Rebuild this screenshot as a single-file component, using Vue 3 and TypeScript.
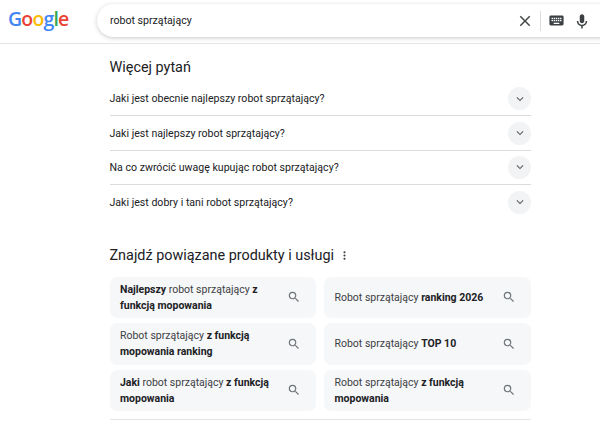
<script setup lang="ts">
interface Part {
  text: string;
  bold?: boolean;
}

const questions: string[] = [
  'Jaki jest obecnie najlepszy robot sprzątający?',
  'Jaki jest najlepszy robot sprzątający?',
  'Na co zwrócić uwagę kupując robot sprzątający?',
  'Jaki jest dobry i tani robot sprzątający?',
];

const chips: Part[][] = [
  [{ text: 'Najlepszy', bold: true }, { text: ' robot sprzątający ' }, { text: 'z funkcją mopowania', bold: true }],
  [{ text: 'Robot sprzątający ' }, { text: 'ranking 2026', bold: true }],
  [{ text: 'Robot sprzątający ' }, { text: 'z funkcją mopowania ranking', bold: true }],
  [{ text: 'Robot sprzątający ' }, { text: 'TOP 10', bold: true }],
  [{ text: 'Jaki', bold: true }, { text: ' robot sprzątający ' }, { text: 'z funkcją mopowania', bold: true }],
  [{ text: 'Robot sprzątający ' }, { text: 'z funkcją mopowania', bold: true }],
];
</script>

<template>
  <div class="page">
    <header class="topbar">
      <div class="logo" aria-label="Google">
        <span class="blue">G</span><span class="red">o</span><span class="yellow">o</span><span class="blue">g</span><span class="green">l</span><span class="red">e</span>
      </div>
      <div class="searchbox">
        <span class="query">robot sprzątający</span>
        <svg class="clear" viewBox="0 0 24 24" width="18" height="18">
          <path d="M19 6.41 17.59 5 12 10.59 6.41 5 5 6.41 10.59 12 5 17.59 6.41 19 12 13.41 17.59 19 19 17.59 13.41 12z" fill="#444746" />
        </svg>
        <span class="divider"></span>
        <svg class="kbd" viewBox="0 0 24 24" width="17" height="17">
          <path d="M20 5H4c-1.1 0-2 .9-2 2v10c0 1.1.9 2 2 2h16c1.1 0 2-.9 2-2V7c0-1.1-.9-2-2-2zm-9 3h2v2h-2V8zm0 3h2v2h-2v-2zM8 8h2v2H8V8zm0 3h2v2H8v-2zm-1 2H5v-2h2v2zm0-3H5V8h2v2zm9 7H8v-2h8v2zm0-4h-2v-2h2v2zm0-3h-2V8h2v2zm3 3h-2v-2h2v2zm0-3h-2V8h2v2z" fill="#3c4043" />
        </svg>
        <svg class="mic" viewBox="0 0 24 24" width="18" height="18">
          <path d="M12 15c1.66 0 3-1.34 3-3V6c0-1.66-1.34-3-3-3S9 4.34 9 6v6c0 1.66 1.34 3 3 3z" fill="#3c4043" />
          <path d="M17 12c0 2.76-2.24 5-5 5s-5-2.24-5-5H5c0 3.53 2.61 6.43 6 6.92V22h2v-3.08c3.39-.49 6-3.39 6-6.92h-2z" fill="#3c4043" />
        </svg>
      </div>
    </header>

    <main class="content">
      <h2 class="heading paa-title">Więcej pytań</h2>
      <div class="questions">
        <div v-for="q in questions" :key="q" class="question">
          <span>{{ q }}</span>
          <span class="expand">
            <svg viewBox="0 0 24 24" width="14" height="14">
              <path d="M16.59 8.59 12 13.17 7.41 8.59 6 10l6 6 6-6z" fill="#5f6368" />
            </svg>
          </span>
        </div>
      </div>

      <div class="related-head">
        <h2 class="heading">Znajdź powiązane produkty i usługi</h2>
        <svg viewBox="0 0 24 24" width="13" height="13">
          <path d="M12 8a2 2 0 1 0 0-4 2 2 0 0 0 0 4zm0 2a2 2 0 1 0 0 4 2 2 0 0 0 0-4zm0 6a2 2 0 1 0 0 4 2 2 0 0 0 0-4z" fill="#3c4043" />
        </svg>
      </div>
      <div class="chips">
        <div v-for="(chip, i) in chips" :key="i" class="chip">
          <span class="chip-text"><template v-for="(part, j) in chip" :key="j"><b v-if="part.bold">{{ part.text }}</b><template v-else>{{ part.text }}</template></template></span>
          <svg class="chip-search" viewBox="0 0 24 24" width="14" height="14">
            <path d="M15.5 14h-.79l-.28-.27A6.47 6.47 0 0 0 16 9.5 6.5 6.5 0 1 0 9.5 16c1.61 0 3.09-.59 4.23-1.57l.27.28v.79l5 4.99L20.49 19l-4.99-5zm-6 0C7.01 14 5 11.99 5 9.5S7.01 5 9.5 5 14 7.01 14 9.5 11.99 14 9.5 14z" fill="#70757a" />
          </svg>
        </div>
      </div>
      <div class="bottom-rule"></div>
    </main>
  </div>
</template>

<style scoped>
.page {
  width: 600px;
  height: 423px;
  overflow: hidden;
  background: #fff;
  font-family: Roboto, "Liberation Sans", sans-serif;
  color: #202124;
}

.topbar {
  height: 44px;
  box-sizing: border-box;
  border-bottom: 1px solid #e3e4e6;
  display: flex;
  align-items: flex-start;
  padding-top: 4px;
}

.logo {
  width: 97px;
  box-sizing: border-box;
  padding-left: 8px;
  font-family: "Open Sans", sans-serif;
  font-size: 19.5px;
  line-height: 30px;
  letter-spacing: -0.85px;
  font-weight: 600;
}

.blue { color: #4285f4; }
.red { color: #ea4335; }
.yellow { color: #fbbc05; }
.green { color: #34a853; }

.searchbox {
  flex: 1;
  height: 33px;
  box-sizing: border-box;
  margin-right: -20px;
  padding: 0 29px 0 13px;
  display: flex;
  align-items: center;
  background: #fff;
  border-radius: 17px;
  box-shadow: 0 1px 4px rgba(32, 33, 36, 0.24);
}

.query {
  flex: 1;
  font-size: 10.6px;
  color: #202124;
}

.clear { margin-right: 6px; }

.divider {
  width: 1px;
  height: 20px;
  background: #dadce0;
  margin-right: 7px;
}

.kbd { margin-right: 8px; }

.content {
  width: 421.5px;
  margin-left: 109.5px;
}

.heading {
  margin: 0;
  font-size: 14.4px;
  line-height: 20px;
  font-weight: 400;
  color: #202124;
}

.paa-title {
  padding-top: 14px;
  padding-bottom: 4px;
}

.question {
  height: 34.4px;
  box-sizing: border-box;
  display: flex;
  align-items: center;
  justify-content: space-between;
  border-bottom: 1px solid #dadce0;
  font-size: 10.6px;
}

.question:last-child { border-bottom: none; }

.expand {
  width: 23px;
  height: 23px;
  border-radius: 50%;
  background: #f1f3f4;
  display: flex;
  align-items: center;
  justify-content: center;
}

.related-head {
  display: flex;
  align-items: center;
  gap: 4px;
  margin-top: 26px;
}

.chips {
  display: grid;
  grid-template-columns: 206.5px 207px;
  column-gap: 8px;
  row-gap: 5px;
  margin-top: 11px;
}

.chip {
  height: 41.5px;
  box-sizing: border-box;
  padding: 0 15px 0 10.5px;
  display: flex;
  align-items: center;
  gap: 12px;
  background: #f6f7f9;
  border-radius: 7px;
  font-size: 10.5px;
  line-height: 16px;
  color: #3c4043;
}

.chip-text {
  flex: 1;
  padding-top: 1px;
}

.chip b {
  font-weight: 700;
  color: #202124;
}

.bottom-rule {
  height: 1px;
  background: #e3e4e6;
  margin-top: 8px;
}
</style>

<style>
html, body {
  margin: 0;
  background: #fff;
}
</style>
